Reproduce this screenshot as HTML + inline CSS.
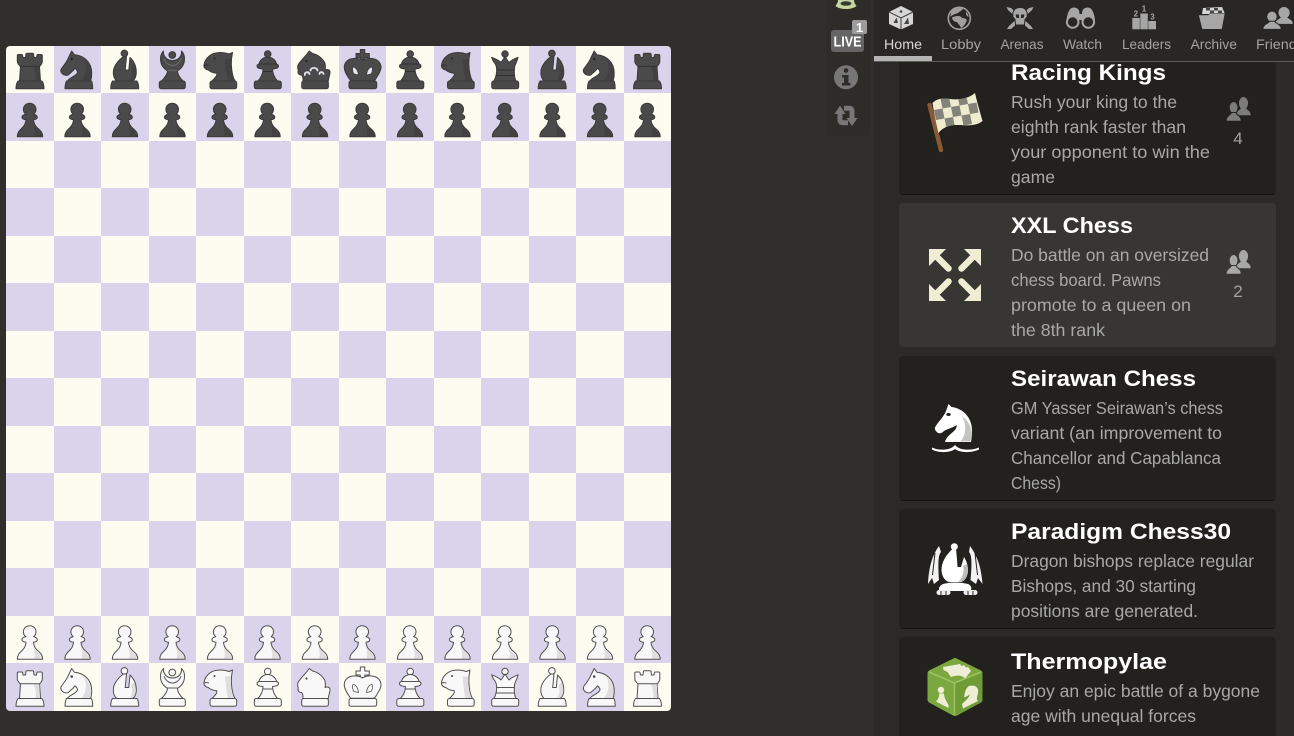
<!DOCTYPE html>
<html lang="en"><head><meta charset="utf-8"><title>Chess variants</title>
<style>
html,body{margin:0;padding:0;width:1294px;height:736px;overflow:hidden;background:#312e2b}
svg{display:block;position:absolute;left:0;top:0}
text{font-family:"Liberation Sans",sans-serif}
.b{fill:var(--f);stroke:var(--s);stroke-width:1;stroke-linejoin:round}
.d{fill:none;stroke:var(--d);stroke-width:1;stroke-linecap:round}
.h{fill:var(--h);stroke:none}
.e{fill:var(--e);stroke:none}
.o{fill:var(--o);stroke:var(--s);stroke-width:.8}
.l{fill:none;stroke:var(--l);stroke-width:1.1}
.tt{font-size:22px;font-weight:700;fill:#fff}
.tx{font-size:17.5px;fill:#a8a8a6}
.tab{font-size:14px;fill:#a3a3a3}
.n{font-size:17px;fill:#a2a2a2;text-anchor:middle}
.black{--f:#4a4a4a;--s:#3a3a3a;--d:#303030;--h:#414141;--e:#262626;--o:#e6e4ee;--l:#686868}
.white{--f:#f8f8f8;--s:#505050;--d:#555;--h:#dedede;--e:#484848;--o:#f8f8f8;--l:#666}
</style></head><body>
<svg width="1294" height="736" viewBox="0 0 1294 736" xmlns="http://www.w3.org/2000/svg">
<defs>
<pattern id="bd" patternUnits="userSpaceOnUse" x="6" y="46" width="95" height="95">
<rect width="95" height="95" fill="#fcfdf0"/>
<rect x="48" y="0" width="47" height="47" fill="#d9d4ec"/>
<rect x="0" y="47" width="48" height="48" fill="#d9d4ec"/>
</pattern>
<path id="base" class="b" d="M12 35H36C37.500 37 38 40 38 42.800H10C10 40 10.500 37 12 35Z"/>
<g id="P">
<path class="b" d="M23.700 9.800C27.200 9.800 30 12.400 30 15.700C30 17.800 29 19.600 27.600 20.600C30 21.300 31.300 22.400 31.300 23.600C31.300 25 29.500 26 27.500 26.300C27.800 29.500 29 32 31 34C34 36.500 36.700 38.500 36.700 43.200H11.300C11.300 38.500 14 36.500 16.500 34C18.500 32 19.700 29.500 20 26.300C18 26 15.900 25 15.900 23.600C15.900 22.400 17.400 21.300 19.800 20.600C18.400 19.600 17.400 17.800 17.400 15.700C17.400 12.400 20.200 9.800 23.700 9.800Z"/>
<path class="h" d="M26.500 27C27 31 28.500 33 30.500 35C33 37 35.500 39 36 42.500H28C30 38 27.500 32 26.500 27Z"/>
</g>
<g id="R">
<path class="b" d="M11.300 9.500C11.300 8.800 11.800 8.500 12.500 8.500H15.800C16.300 8.500 16.500 8.800 16.600 9.500L17 11.500H19.500L19.900 8C20 7.500 20.400 7.300 21 7.300H26.500C27.200 7.300 27.500 7.500 27.600 8L28 11.500H30.500L30.900 9.500C31 8.800 31.200 8.500 31.700 8.500H35C35.800 8.500 36.300 8.800 36.300 9.500V15.500C36.300 17.500 34.500 19.500 33.500 20.500L34.500 35H13.500L14.500 20.500C13.500 19.500 11.300 17.500 11.300 15.500Z"/>
<path class="d" d="M14.500 20.300H33.500"/>
<path class="h" d="M27.500 21H33.400L34 34.500H29.500C30.500 30 29.500 25 27.500 21Z"/>
<use href="#base"/>
</g>
<g id="N">
<path class="b" d="M18.200 5L21 8.800C29 9.500 38.200 15 38.200 27C38.200 30 37.800 33 37 35H14C15 32 22 30.500 23.800 27C24.500 25 23 23.500 21.500 22.300C19 26 16 27.500 14.800 29C13 30 10 29 8.500 27.500C7 25.500 6.800 24 8 22.500C11 18.500 13.500 15.500 15 11.500Z"/>
<path class="h" d="M30 13C35 17 37.600 22 37.600 27C37.600 30 37.200 33 36.500 34.500H28C33 29 34 20 30 13Z"/>
<circle class="e" cx="18.200" cy="13" r="1.300"/>
<path class="b" d="M13 35H38C39 37 39.200 40 39.200 42.800H11.500C11.500 40 12 37 13 35Z"/>
</g>
<g id="B">
<circle class="b" cx="23.400" cy="7.400" r="3.300"/>
<path class="b" d="M22.500 10.500C17.500 14 12.300 20 12.300 26.500C12.300 30.500 13.500 33 15.500 35H32C34 33 35.300 30.500 35.300 26.500C35.300 20.500 32.800 15 29 11.500L27.800 24H24.200L25.500 10.500Z"/>
<path class="h" d="M30 22C32 27 31 31.500 28.500 34.500H31.500C33.500 33 34.800 30.500 34.800 26.500C34.800 23.500 34 20.500 33 18.500Z"/>
<path class="b" d="M11.500 35H36C37.200 37 37.700 40 37.700 42.800H9.700C9.700 40 10.200 37 11.500 35Z"/>
</g>
<g id="A">
<circle class="b" cx="23.800" cy="9" r="3.400"/>
<path class="b" d="M15 5C11 8.500 11 17 15 21.500C16.500 23.200 17.800 24.200 19 24.800C19 28 16.500 31.500 13 35H34.500C31 31.500 29 28 29 24.800C30.200 24.200 31.500 23.200 33 21.500C37 17 37 8.500 33 5C33.500 10 30 14.500 24 14.500C18 14.500 14.500 10 15 5Z"/>
<path class="l" d="M15.500 12.500C17 17.500 21 19.500 24 19.500C27 19.500 31 17.500 32.500 12.500"/>
<path class="l" d="M19 24.500H29"/>
<rect class="b" x="10.800" y="35" width="26" height="7.800" rx="2"/>
</g>
<g id="C">
<path class="b" d="M8 19C9 12 15 7.500 21 6.800C26 6 31 7.300 33 8L36.500 6.500L35.500 13C35 18 35.500 29 39 35H16C19 32 21.500 29.500 20.700 27.300C18 27 14.500 26 12.300 24C9.500 23.500 7.500 21.500 8 19Z"/>
<path class="h" d="M29 13C30 20 30 28 32 34.500H38C35 28 34.500 18 35 13Z"/>
<circle class="e" cx="18.500" cy="12.500" r="1"/>
<path class="d" d="M8.500 19.500C10 18.500 11 19 12.500 19.500"/>
<rect class="b" x="14" y="35" width="26.700" height="7.800" rx="2"/>
</g>
<g id="E">
<circle class="b" cx="24.200" cy="8" r="3.300"/>
<path class="b" d="M24.200 11C20 11 16 14.500 15.500 18C14 18.500 13.500 19 13.500 20C13.500 21.800 15.500 22.800 19.500 23C19.500 27 18 31 14.500 35H34C30.500 31 29 27 29 23C33 22.800 35 21.800 35 20C35 19 34.500 18.500 33 18C32.500 14.500 28.500 11 24.200 11Z"/>
<path class="d" d="M15.700 18H32.800M19.500 25.500H29"/>
<rect class="b" x="10.800" y="35" width="27" height="7.800" rx="2"/>
</g>
<g id="H">
<path class="b" d="M18.300 5L21.500 7.500C27 8.500 32 13 34 17.300C34.500 20 34.500 22.500 34 24C36 23 38.500 23.500 39 25.500C39.300 28 37.500 32 37.300 35H12C12 32 12 31 10.800 29C8 29.500 6.300 27 7.300 24.500C6.500 22.500 6.500 20 7.300 18.500C10 14 14 11 18.300 5Z"/>
<path class="d" style="stroke:var(--o);stroke-width:1.800" d="M13.800 29C13.500 26 17.500 25 18.500 28M19.500 24.500C20 21 26 21 26.500 24.500M28.500 28C28.500 25.500 32 25.500 32.500 28"/>
<circle class="e" cx="15.500" cy="15" r="1.100"/>
<rect class="b" x="10.700" y="35" width="26.700" height="7.800" rx="2"/>
</g>
<g id="K">
<path class="b" d="M21.800 3.500H26.300V7.500H30.800V11.500H26.300V14H21.800V11.500H17.500V7.500H21.800Z"/>
<path class="b" d="M24 14.500C27 12.500 31 12 35 12.700C40 13.700 42.800 18 42.500 22C42.200 26 39 30 36 34.700H12C9 30 6 26 5.800 22C5.500 18 8 13.700 13 12.700C17 12 21 12.500 24 14.500Z"/>
<path class="o" d="M14.500 21C17 21 19.500 24 20 29L15.500 28C14 26 13.500 23 14.500 21ZM33.500 21C31 21 28.500 24 28 29L32.500 28C34 26 34.500 23 33.500 21Z"/>
<rect class="b" x="10.500" y="35" width="27.700" height="7.800" rx="2"/>
</g>
<g id="Q">
<circle class="b" cx="24" cy="8" r="3.200"/>
<path class="b" d="M24 10.500C22.500 13 21 15 20 16.500C17.500 14 14 12.500 10.700 11.300C11.300 13 12 15.500 13.700 17C15 19 15.700 21 15.700 24C15.700 28 15 31 13 35H35C33 31 33.300 28 33.300 24C33.300 21 34 19 35 17C36 15.500 36.500 13 37 11.300C33.800 12.500 30.500 14 28 16.500C27 15 25.500 13 24 10.500Z"/>
<path class="d" d="M15.700 24H33.300M15 29.500H33.500"/>
<rect class="b" x="10.700" y="35" width="27" height="7.800" rx="2"/>
</g>
<g id="back">
<use href="#R" x="6"/><use href="#N" x="53.500"/><use href="#B" x="101"/><use href="#A" x="148.500"/><use href="#C" x="196"/><use href="#E" x="243.500"/><use href="#H" x="291"/><use href="#K" x="338.500"/><use href="#E" x="386"/><use href="#C" x="433.500"/><use href="#Q" x="481"/><use href="#B" x="528.500"/><use href="#N" x="576"/><use href="#R" x="623.500"/>
</g>
<g id="pawns">
<use href="#P" x="6"/><use href="#P" x="53.500"/><use href="#P" x="101"/><use href="#P" x="148.500"/><use href="#P" x="196"/><use href="#P" x="243.500"/><use href="#P" x="291"/><use href="#P" x="338.500"/><use href="#P" x="386"/><use href="#P" x="433.500"/><use href="#P" x="481"/><use href="#P" x="528.500"/><use href="#P" x="576"/><use href="#P" x="623.500"/>
</g>
<g id="users">
<ellipse cx="17.500" cy="6.200" rx="4.600" ry="6.200"/>
<path d="M15 11H20C20.500 13 24.700 13.500 24.700 18.300H10C10 14 14.500 13 15 11Z"/>
<ellipse cx="7.600" cy="10.500" rx="4.400" ry="6" stroke="var(--k)" stroke-width="1"/>
<path d="M5.500 15.500H9.800C10.500 18 15.300 18.500 15.300 24.300H0C0 18.500 5 18 5.500 15.500Z" stroke="var(--k)" stroke-width="1"/>
</g>
<clipPath id="main"><rect x="874" y="62" width="420" height="674"/></clipPath>
<clipPath id="cloth"><path d="M932.500 103C937 98 944 98 950 99C958 100 968 99 975 93C977 102 980 112 982.500 121C975 127 965 125 957 125C950 125 943 127 938.500 133C936 123 934 113 932.500 103Z"/></clipPath>
</defs>

<rect width="1294" height="736" fill="#312e2b"/>
<rect x="6" y="46" width="665" height="665" rx="4" fill="url(#bd)"/>
<g class="black"><use href="#back" y="46"/><use href="#pawns" y="93.500"/></g>
<g class="white"><use href="#pawns" y="616"/><use href="#back" y="663.500"/></g>

<!-- left mini strip -->
<path d="M826 0H871V132a4 4 0 0 1-4 4H830a4 4 0 0 1-4-4Z" fill="#2e2c29"/>
<path d="M838 0C838 3 836 5 835.500 6C840 10 852 10 856.500 6C856 5 854 3 854 0Z" fill="#c6d6a2"/>
<ellipse cx="846" cy="3.500" rx="5.500" ry="2.300" fill="#3a3a34"/>
<rect x="831" y="30" width="33" height="22" rx="3" fill="#656565"/>
<text x="833.500" y="46.500" font-size="14.500" font-weight="700" fill="#fff" textLength="28" lengthAdjust="spacingAndGlyphs">LIVE</text>
<rect x="852" y="20" width="15" height="14" rx="2" fill="#9b9b9b"/>
<text x="859.500" y="32" font-size="13" font-weight="700" fill="#fff" text-anchor="middle">1</text>
<circle cx="846" cy="77.300" r="12" fill="#777"/>
<circle cx="846" cy="70.500" r="2.300" fill="#2e2c29"/>
<path d="M842 75H848.500V83H850.500V85.500H842V83H844V77.500H842Z" fill="#2e2c29"/>
<g fill="none" stroke="#777" stroke-width="5">
<path d="M840 112V120Q840 122.800 843 122.800H848"/>
<path d="M852 119V111Q852 108.200 849 108.200H844"/>
</g>
<path d="M834.500 114H845.500L840 105.500ZM846.500 118H857.500L852 126Z" fill="#777"/>

<!-- main panel -->
<rect x="874" y="0" width="420" height="736" fill="#2b2a27"/>
<rect x="874" y="0" width="420" height="61" fill="#282725"/>
<rect x="874" y="61" width="420" height="1" fill="#5c5c5a"/>
<rect x="874" y="56" width="58" height="5" fill="#b4b4b4"/>

<!-- tab icons -->
<g>
<path d="M901 6L913 12V24L901 29.500L889 24V12Z" fill="#d6d6d6"/>
<path d="M889 12L901 18L913 12M901 18V29.500" fill="none" stroke="#3a3a38" stroke-width="1"/>
<circle cx="901" cy="11.500" r="1.300" fill="#444"/><path d="M893.500 23H898L896.500 17.500Z" fill="#444"/><path d="M904 24H909L908 17.500Z" fill="#444"/>
<circle cx="959.300" cy="18.300" r="11" fill="none" stroke="#9f9f9f" stroke-width="1.600"/>
<path d="M953 9C957 8 960 7.500 963 8.500C962 11 959 11.500 958 13C955 14 952 15 950.500 17C950.500 13 951.500 11 953 9ZM952 17.500C956 15.500 961 15.500 962 18C966 18 968 20 966 22C965 25 963 27 961 28C960 25 958 24 957 22C954 22 952.500 20 952 17.500ZM966 12C967.500 13 968.500 15 968.500 17C967 16.500 965.500 14 966 12Z" fill="#9f9f9f"/>
<path d="M1006.500 7L1011 8L1031 26L1033 29L1029 29L1008 10ZM1033.500 7L1029 8L1009 26L1007 29L1011 29L1032 10Z" fill="#a6a6a6"/>
<path d="M1020 7.500C1026 7.500 1028 12 1027 17L1025 19.500L1024.500 25H1015.500L1015 19.500L1013 17C1012 12 1014 7.500 1020 7.500Z" fill="#a6a6a6" stroke="#282725"/>
<path d="M1015.500 14.500H1019V18H1016.500ZM1021 14.500H1024.500L1023.500 18H1021Z" fill="#282725"/>
<path d="M1066.500 20C1067.500 13 1069 8 1073.500 7.500C1078 7.500 1079.500 10 1079.500 14H1082C1082 10 1083.500 7.500 1088 7.500C1092.500 8 1094 13 1095 20Z" fill="#a6a6a6"/>
<circle cx="1072.700" cy="22" r="5.800" fill="#282725" stroke="#a6a6a6" stroke-width="2"/>
<circle cx="1088.300" cy="22" r="5.800" fill="#282725" stroke="#a6a6a6" stroke-width="2"/>
<rect x="1132.300" y="18" width="7.500" height="11.300" fill="#a6a6a6"/><rect x="1140.300" y="13.500" width="7.500" height="15.800" fill="#a6a6a6"/><rect x="1148.300" y="21" width="7.700" height="8.300" fill="#a6a6a6"/>
<text x="1144" y="11.500" font-size="8" font-weight="700" fill="#a6a6a6" text-anchor="middle">1</text>
<text x="1135.800" y="16.500" font-size="8" font-weight="700" fill="#a6a6a6" text-anchor="middle">2</text>
<text x="1152.500" y="19.500" font-size="8" font-weight="700" fill="#a6a6a6" text-anchor="middle">3</text>
<path d="M1203 8L1222 7L1225 14L1202 14Z" fill="#d4d4d4"/>
<path d="M1206 8H1210V10.500H1206ZM1214 8H1218V10.500H1214ZM1210 10.500H1214V13H1210ZM1218 10.500H1222V13H1218Z" fill="#444"/>
<path d="M1198.500 15H1208L1210 13.500H1225L1222 29.300H1202Z" fill="#a6a6a6" stroke="#282725" stroke-width=".6"/>
<g transform="translate(1262.700 7) scale(1.220 .920)" fill="#a6a6a6" style="--k:#282725"><use href="#users"/></g>
</g>

<!-- tab labels -->
<text class="tab" x="884" y="49" textLength="38" lengthAdjust="spacingAndGlyphs" style="fill:#d8d8d8">Home</text>
<text class="tab" x="941" y="49" textLength="40" lengthAdjust="spacingAndGlyphs">Lobby</text>
<text class="tab" x="1000.500" y="49" textLength="43" lengthAdjust="spacingAndGlyphs">Arenas</text>
<text class="tab" x="1063" y="49" textLength="39" lengthAdjust="spacingAndGlyphs">Watch</text>
<text class="tab" x="1122" y="49" textLength="49" lengthAdjust="spacingAndGlyphs">Leaders</text>
<text class="tab" x="1190.500" y="49" textLength="46.500" lengthAdjust="spacingAndGlyphs">Archive</text>
<text class="tab" x="1256" y="49" textLength="48" lengthAdjust="spacingAndGlyphs">Friends</text>

<g clip-path="url(#main)">
<!-- cards -->
<rect x="899" y="40" width="377" height="155" rx="4" fill="#22211d"/><rect x="901" y="194" width="373" height="1" fill="#151412"/>
<rect x="899" y="203" width="377" height="144" rx="4" fill="#373633"/>
<rect x="899" y="356" width="377" height="145" rx="4" fill="#22211d"/><rect x="901" y="500" width="373" height="1" fill="#151412"/>
<rect x="899" y="509" width="377" height="120" rx="4" fill="#22211d"/><rect x="901" y="628" width="373" height="1" fill="#151412"/>
<rect x="899" y="637" width="377" height="130" rx="4" fill="#22211d"/>

<!-- Racing Kings -->
<text class="tt" x="1011" y="80" textLength="155" lengthAdjust="spacingAndGlyphs">Racing Kings</text>
<text class="tx" x="1011" y="108" textLength="166" lengthAdjust="spacingAndGlyphs">Rush your king to the</text>
<text class="tx" x="1011" y="133" textLength="175" lengthAdjust="spacingAndGlyphs">eighth rank faster than</text>
<text class="tx" x="1011" y="158" textLength="199" lengthAdjust="spacingAndGlyphs">your opponent to win the</text>
<text class="tx" x="1011" y="183" textLength="44" lengthAdjust="spacingAndGlyphs">game</text>
<path d="M929.500 105L941 150" stroke="#8a5a36" stroke-width="4.500" stroke-linecap="round"/>
<path d="M932.500 103C937 98 944 98 950 99C958 100 968 99 975 93C977 102 980 112 982.500 121C975 127 965 125 957 125C950 125 943 127 938.500 133C936 123 934 113 932.500 103Z" fill="#efebcf"/>
<g clip-path="url(#cloth)"><g transform="matrix(8.500 -1.500 2 10 932 100)" fill="#84837a">
<rect x="1" y="0" width="1" height="1"/><rect x="3" y="0" width="1" height="1"/>
<rect x="0" y="1" width="1" height="1"/><rect x="2" y="1" width="1" height="1"/><rect x="4" y="1" width="1" height="1"/>
<rect x="1" y="2" width="1" height="1"/><rect x="3" y="2" width="1" height="1"/>
</g></g>
<g transform="translate(1226 97)" fill="#7c7c7a" style="--k:#22211d"><use href="#users"/></g>
<text class="n" x="1238" y="144">4</text>

<!-- XXL Chess -->
<text class="tt" x="1011" y="233" textLength="122" lengthAdjust="spacingAndGlyphs">XXL Chess</text>
<text class="tx" x="1011" y="261" textLength="198" lengthAdjust="spacingAndGlyphs">Do battle on an oversized</text>
<text class="tx" x="1011" y="286" textLength="150" lengthAdjust="spacingAndGlyphs">chess board. Pawns</text>
<text class="tx" x="1011" y="311" textLength="180" lengthAdjust="spacingAndGlyphs">promote to a queen on</text>
<text class="tx" x="1011" y="336" textLength="94" lengthAdjust="spacingAndGlyphs">the 8th rank</text>
<g fill="#f0edd3" stroke="#f0edd3">
<g transform="translate(929 249)"><path d="M0 0H17L0 17Z" stroke="none"/><path d="M7 7L19.500 19.500" stroke-width="6.500" stroke-linecap="round"/></g>
<g transform="translate(981 249) scale(-1 1)"><path d="M0 0H17L0 17Z" stroke="none"/><path d="M7 7L19.500 19.500" stroke-width="6.500" stroke-linecap="round"/></g>
<g transform="translate(929 301) scale(1 -1)"><path d="M0 0H17L0 17Z" stroke="none"/><path d="M7 7L19.500 19.500" stroke-width="6.500" stroke-linecap="round"/></g>
<g transform="translate(981 301) scale(-1 -1)"><path d="M0 0H17L0 17Z" stroke="none"/><path d="M7 7L19.500 19.500" stroke-width="6.500" stroke-linecap="round"/></g>
</g>
<g transform="translate(1226 250)" fill="#a8a8a4" style="--k:#373633"><use href="#users"/></g>
<text class="n" x="1238" y="297">2</text>

<!-- Seirawan -->
<text class="tt" x="1011" y="386" textLength="185" lengthAdjust="spacingAndGlyphs">Seirawan Chess</text>
<text class="tx" x="1011" y="414" textLength="212" lengthAdjust="spacingAndGlyphs">GM Yasser Seirawan’s chess</text>
<text class="tx" x="1011" y="439" textLength="211" lengthAdjust="spacingAndGlyphs">variant (an improvement to</text>
<text class="tx" x="1011" y="464" textLength="210" lengthAdjust="spacingAndGlyphs">Chancellor and Capablanca</text>
<text class="tx" x="1011" y="489" textLength="50" lengthAdjust="spacingAndGlyphs">Chess)</text>
<path d="M948.500 404L951.500 407C962 408 972 417 972 430C972 435 971.500 439 971 442H945C946 437 951 434 954 431C956 429 957 427 956.500 425C953 428 949 428 944 431C941 434 938 434 936 431C934 429 935 427 936.500 425C940 420 944 416 946 411Z" fill="#fff"/>
<path d="M962 416C968 421 971 426 971.500 432C971.500 436 971 439 970.500 441.500H960C966 437 967 425 962 416Z" fill="#c4c4c4"/>
<ellipse cx="948.500" cy="414.500" rx="2.200" ry="1.500" fill="#22211d"/>
<path d="M932 447.500C938 450.500 950 451 955 445C960 451 972 450.500 979 447.500V449.500C972 453 960 453 955 449C950 453 938 453 932 449.500Z" fill="#fff"/>

<!-- Paradigm -->
<text class="tt" x="1011" y="539" textLength="220" lengthAdjust="spacingAndGlyphs">Paradigm Chess30</text>
<text class="tx" x="1011" y="567" textLength="243" lengthAdjust="spacingAndGlyphs">Dragon bishops replace regular</text>
<text class="tx" x="1011" y="592" textLength="185" lengthAdjust="spacingAndGlyphs">Bishops, and 30 starting</text>
<text class="tx" x="1011" y="617" textLength="187" lengthAdjust="spacingAndGlyphs">positions are generated.</text>
<circle cx="954.300" cy="546.700" r="3.500" fill="#fff"/>
<path d="M952.500 549C946 555 941.500 562 941.500 570C941.500 576 945 581 949 582H961C965 581 968 576 968 570C968 565 966 560 964 557L961 567H957.500L957 559L956 549Z" fill="#fff"/>
<path d="M963 566C965 572 962 579 958 581.500H961C965 581 968 576 968 570C968 568 967.500 566 967 564Z" fill="#bcbcbc"/>
<path d="M939 546C934 553 929 563 928 584L932 578L934 584L939 580C938 565 938 555 941 552Z" fill="#f2f2f2"/>
<path d="M970 546C975 553 981 563 982.500 584L978 578L976 584L970.500 580C972 565 972 555 969 552Z" fill="#f2f2f2"/>
<path d="M935 553L932.500 575M975 553L977.500 575" stroke="#22211d" stroke-width="1"/>
<path d="M943 584C950 582 960 582 968 584C972 586 972 589 970 591H940C938 589 939 586 943 584Z" fill="#fff"/>
<rect x="936.500" y="590" width="14" height="5" rx="2.500" fill="#eee"/><rect x="963.500" y="590" width="14" height="5" rx="2.500" fill="#eee"/>
<path d="M941 591V595M946 591V595M968 591V595M973 591V595" stroke="#22211d" stroke-width="1"/>

<!-- Thermopylae -->
<text class="tt" x="1011" y="669" textLength="156" lengthAdjust="spacingAndGlyphs">Thermopylae</text>
<text class="tx" x="1011" y="697" textLength="249" lengthAdjust="spacingAndGlyphs">Enjoy an epic battle of a bygone</text>
<text class="tx" x="1011" y="722" textLength="185" lengthAdjust="spacingAndGlyphs">age with unequal forces</text>
<path d="M955 657.700L980 670C982 671 982.500 672 982.500 674V699C982.500 701 982 702 980 703L957 715.500C955.500 716.200 954.500 716.200 953 715.500L930 703C928 702 927.500 701 927.500 699V674C927.500 672 928 671 930 670Z" fill="#7aa83f"/>
<path d="M955 683V715.500L980 703C982 702 982.500 701 982.500 699V672Z" fill="#6f9c37"/>
<path d="M929 672L954.500 683L981 672M954.500 683V715" fill="none" stroke="#9dc262" stroke-width="1.500"/>
<path d="M943 667L960 664L961.500 666L964 665L966 667.500L968 667L971 671L965 678.500C962 675 957 675 951 677L947.500 672L943.500 670Z" fill="#efedd5"/>
<circle cx="941" cy="690" r="3.200" fill="#efedd5"/>
<path d="M939 693.500H944C944 698 947 702 948.500 705L948.500 708L936 701.500C938.500 699 939.500 696 939 693.500Z" fill="#efedd5"/>
<path d="M969 686C976 684.500 979 688 978 693C977 698 976 699 978 701L963 708.500L962 704C966 700 969 698 970 694C968 696 966 697 964 697C965 693 965 689 969 686Z" fill="#efedd5"/>
</g>
</svg>
</body></html>
